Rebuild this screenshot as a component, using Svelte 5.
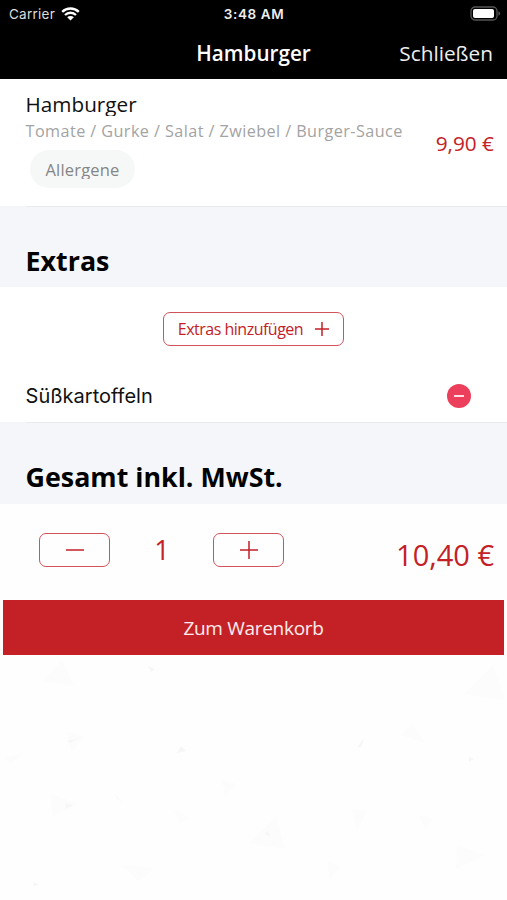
<script>
	const unitPrice = 9.9;
	const extras = [{ name: 'Süßkartoffeln', price: 0.5 }];

	let selected = $state(extras);
	let quantity = $state(1);

	const total = $derived(
		quantity * (unitPrice + selected.reduce((sum, extra) => sum + extra.price, 0))
	);

	/** @param {number} value */
	const euro = (value) => `${value.toFixed(2).replace('.', ',')} €`;

	const decrease = () => {
		if (quantity > 1) quantity -= 1;
	};

	/** @param {string} name */
	const removeExtra = (name) => {
		selected = selected.filter((extra) => extra.name !== name);
	};
</script>

<main class="screen">
	<header>
		<div class="status">
			<span class="carrier">
				Carrier
				<svg width="19" height="14" viewBox="0 0 19 14" aria-hidden="true">
					<path d="M1.2 4.9a11.8 11.8 0 0 1 16.6 0" />
					<path d="M4 8a7.8 7.8 0 0 1 11 0" />
					<path class="fill" d="M6.2 10.3a4.7 4.7 0 0 1 6.6 0L9.5 13.6z" />
				</svg>
			</span>
			<span class="time">3:48 AM</span>
			<svg class="battery" width="31" height="15" viewBox="0 0 31 15" aria-hidden="true">
				<rect class="shell" x="1" y="1" width="26" height="13" rx="4" />
				<rect class="charge" x="3" y="3" width="21" height="9" rx="2" />
				<path class="tip" d="M28.4 5.2v4.6q1.8-.8 1.8-2.3t-1.8-2.3z" />
			</svg>
		</div>
		<nav>
			<h1>Hamburger</h1>
			<button class="close" type="button">Schließen</button>
		</nav>
	</header>

	<section class="item">
		<div class="details">
			<p class="name">Hamburger</p>
			<p class="description">Tomate / Gurke / Salat / Zwiebel / Burger-Sauce</p>
			<button class="allergens" type="button"><span>Allergene</span></button>
		</div>
		<p class="price">{euro(unitPrice)}</p>
	</section>

	<h2>Extras</h2>

	<section class="extras">
		<button class="outline add" type="button">
			<span>Extras hinzufügen</span>
			<svg width="14" height="14" viewBox="0 0 14 14" aria-hidden="true">
				<path d="M0 7h14M7 0v14" />
			</svg>
		</button>
		{#each selected as extra (extra.name)}
			<div class="extra">
				<span>{extra.name}</span>
				<button
					class="remove"
					type="button"
					aria-label={`${extra.name} entfernen`}
					onclick={() => removeExtra(extra.name)}
				>
					<svg width="24" height="24" viewBox="0 0 24 24" aria-hidden="true">
						<circle cx="12" cy="12" r="12" />
						<path d="M7 12h10" />
					</svg>
				</button>
			</div>
		{/each}
	</section>

	<h2 class="tall">Gesamt inkl. MwSt.</h2>

	<section class="total">
		<div class="stepper">
			<button class="outline" type="button" aria-label="Weniger" onclick={decrease}>
				<svg width="18" height="18" viewBox="0 0 18 18" aria-hidden="true">
					<path d="M0 9h18" />
				</svg>
			</button>
			<span class="quantity">{quantity}</span>
			<button class="outline" type="button" aria-label="Mehr" onclick={() => (quantity += 1)}>
				<svg width="18" height="18" viewBox="0 0 18 18" aria-hidden="true">
					<path d="M0 9h18M9 0v18" />
				</svg>
			</button>
		</div>
		<p class="sum">{euro(total)}</p>
	</section>

	<button class="cart" type="button">Zum Warenkorb</button>

	<!-- faint scattered shards on the empty page background -->
	<svg class="shards" width="507" height="245" viewBox="0 0 507 245" aria-hidden="true">
		<path d="M62 5l12 26-32-4zM493 10l12 35-41-6zM66 76l18 5-12 16zM412 68l13 20-24-8zM51 139l28 10-26 12zM222 125l15 4-12 12zM276 162l9 32-36-6zM352 154l14 3-9 19zM419 160l14 4-8 10zM457 190l28 10-29 14zM122 210l32 3-15 14zM327 206l14 6-11 12zM5 102l19-4-13 11zM174 155l17 8-12 5z" />
		<path class="dot" d="M148 11l7 3-4 3zM67 86l12-3-9 5zM181 91l5 5-9 2zM364 83l-2 8-5 2zM115 139l2 4 6 6zM65 148l8 2-7 4zM268 176l2 5-5-2zM469 102l5 2-5 3zM34 227l5 3-6 1z" />
	</svg>
</main>

<style>
	:global(body) {
		margin: 0;
		background: #fefefe;
	}

	.screen {
		--red: #c42127;
		width: 507px;
		height: 900px;
		overflow: hidden;
		display: flex;
		flex-direction: column;
		font-family: 'Open Sans', sans-serif;
		color: #111;
	}

	h1,
	h2,
	p {
		margin: 0;
	}

	button {
		padding: 0;
		border: 0;
		background: none;
		color: inherit;
		font: inherit;
		cursor: pointer;
	}

	svg {
		display: block;
		flex: none;
	}

	header {
		height: 79px;
		background: #000;
		color: #fff;
	}

	.status {
		height: 27px;
		padding: 0 6px 0 9px;
		display: grid;
		grid-template-columns: 1fr auto 1fr;
		align-items: center;
		font-family: Inter, sans-serif;
		font-size: 13.5px;
	}

	.carrier {
		display: flex;
		align-items: center;
		gap: 6px;
		color: #ddd;
		letter-spacing: 0.25px;
	}

	.carrier path {
		fill: none;
		stroke: #fff;
		stroke-width: 2.3;
	}

	.carrier .fill {
		fill: #fff;
		stroke: none;
	}

	.time {
		margin-right: 2px;
		font-weight: 600;
		font-size: 13.5px;
		letter-spacing: 0.6px;
		color: #eee;
	}

	.battery {
		justify-self: end;
	}

	.shell {
		fill: none;
		stroke: #555;
		stroke-width: 1.3;
	}

	.charge {
		fill: #fff;
	}

	.tip {
		fill: #555;
	}

	nav {
		height: 52px;
		padding: 0 14px;
		display: grid;
		grid-template-columns: 1fr auto 1fr;
		align-items: center;
	}

	h1 {
		grid-column: 2;
		font-size: 20.7px;
		line-height: 52px;
		font-weight: 600;
	}

	.close {
		justify-self: end;
		font-size: 20.8px;
		line-height: 52px;
		color: #eee;
	}

	.item {
		height: 127px;
		box-sizing: border-box;
		padding: 13px 13px 0 25.6px;
		display: flex;
		justify-content: space-between;
		background: #fff;
	}

	.name {
		height: 24px;
		font-size: 20.7px;
		line-height: 25px;
		overflow: hidden;
	}

	.description {
		font-size: 16.2px;
		line-height: 30px;
		letter-spacing: 0.43px;
		color: #a3a3a3;
		white-space: nowrap;
	}

	.allergens {
		width: 105px;
		height: 38px;
		margin: 4px 0 0 4.4px;
		display: flex;
		align-items: center;
		justify-content: center;
		border-radius: 19px;
		background: #f6f8f8;
		color: #858585;
		font-size: 16.5px;
		letter-spacing: 0.2px;
	}

	.allergens span {
		height: 19px;
		line-height: 20px;
		overflow: hidden;
	}

	.price {
		margin-top: 36px;
		font-size: 20.8px;
		line-height: 30px;
		color: var(--red);
	}

	h2 {
		height: 81px;
		box-sizing: border-box;
		padding: 36px 0 0 25.6px;
		background: linear-gradient(#e9eaee, #e9eaee) 26px 0 / 100% 1px no-repeat #f4f6fa;
		color: #000;
		font-size: 26.8px;
		line-height: 38px;
		font-weight: 700;
	}

	.tall {
		height: 82px;
	}

	.extras {
		height: 135px;
		box-sizing: border-box;
		padding-top: 25px;
		background: #fff;
	}

	.outline {
		width: 71px;
		height: 34px;
		box-sizing: border-box;
		display: flex;
		align-items: center;
		justify-content: center;
		border: 1.5px solid #cf5359;
		border-radius: 7px;
		color: var(--red);
	}

	.outline path {
		stroke: var(--red);
		stroke-width: 1.5;
	}

	.add {
		width: 181px;
		margin: 0 auto;
		gap: 12px;
		font-size: 16px;
		letter-spacing: -0.5px;
	}

	.extra {
		height: 76px;
		padding: 0 36px 0 25.6px;
		box-sizing: border-box;
		display: flex;
		align-items: center;
		justify-content: space-between;
		padding-top: 24px;
		font-family: Inter, sans-serif;
		font-size: 20px;
	}

	.remove circle {
		fill: #eb3f5b;
	}

	.remove path {
		stroke: #ffdfe4;
		stroke-width: 2;
	}

	.total {
		height: 96px;
		box-sizing: border-box;
		padding: 29px 13px 0 39.4px;
		display: flex;
		justify-content: space-between;
		color: var(--red);
	}

	.stepper {
		height: 34px;
		display: flex;
		align-items: center;
	}

	.quantity {
		width: 103px;
		text-align: center;
		font-size: 27px;
		line-height: 34px;
	}

	.sum {
		font-size: 29px;
		line-height: 44px;
	}

	.cart {
		height: 55px;
		margin: 0 3px;
		flex: none;
		background: var(--red);
		color: #ffeded;
		font-size: 19px;
		letter-spacing: -0.3px;
	}

	.shards {
		fill: #fcfcfc;
	}

	.dot {
		fill: #f6f6f6;
	}
</style>
